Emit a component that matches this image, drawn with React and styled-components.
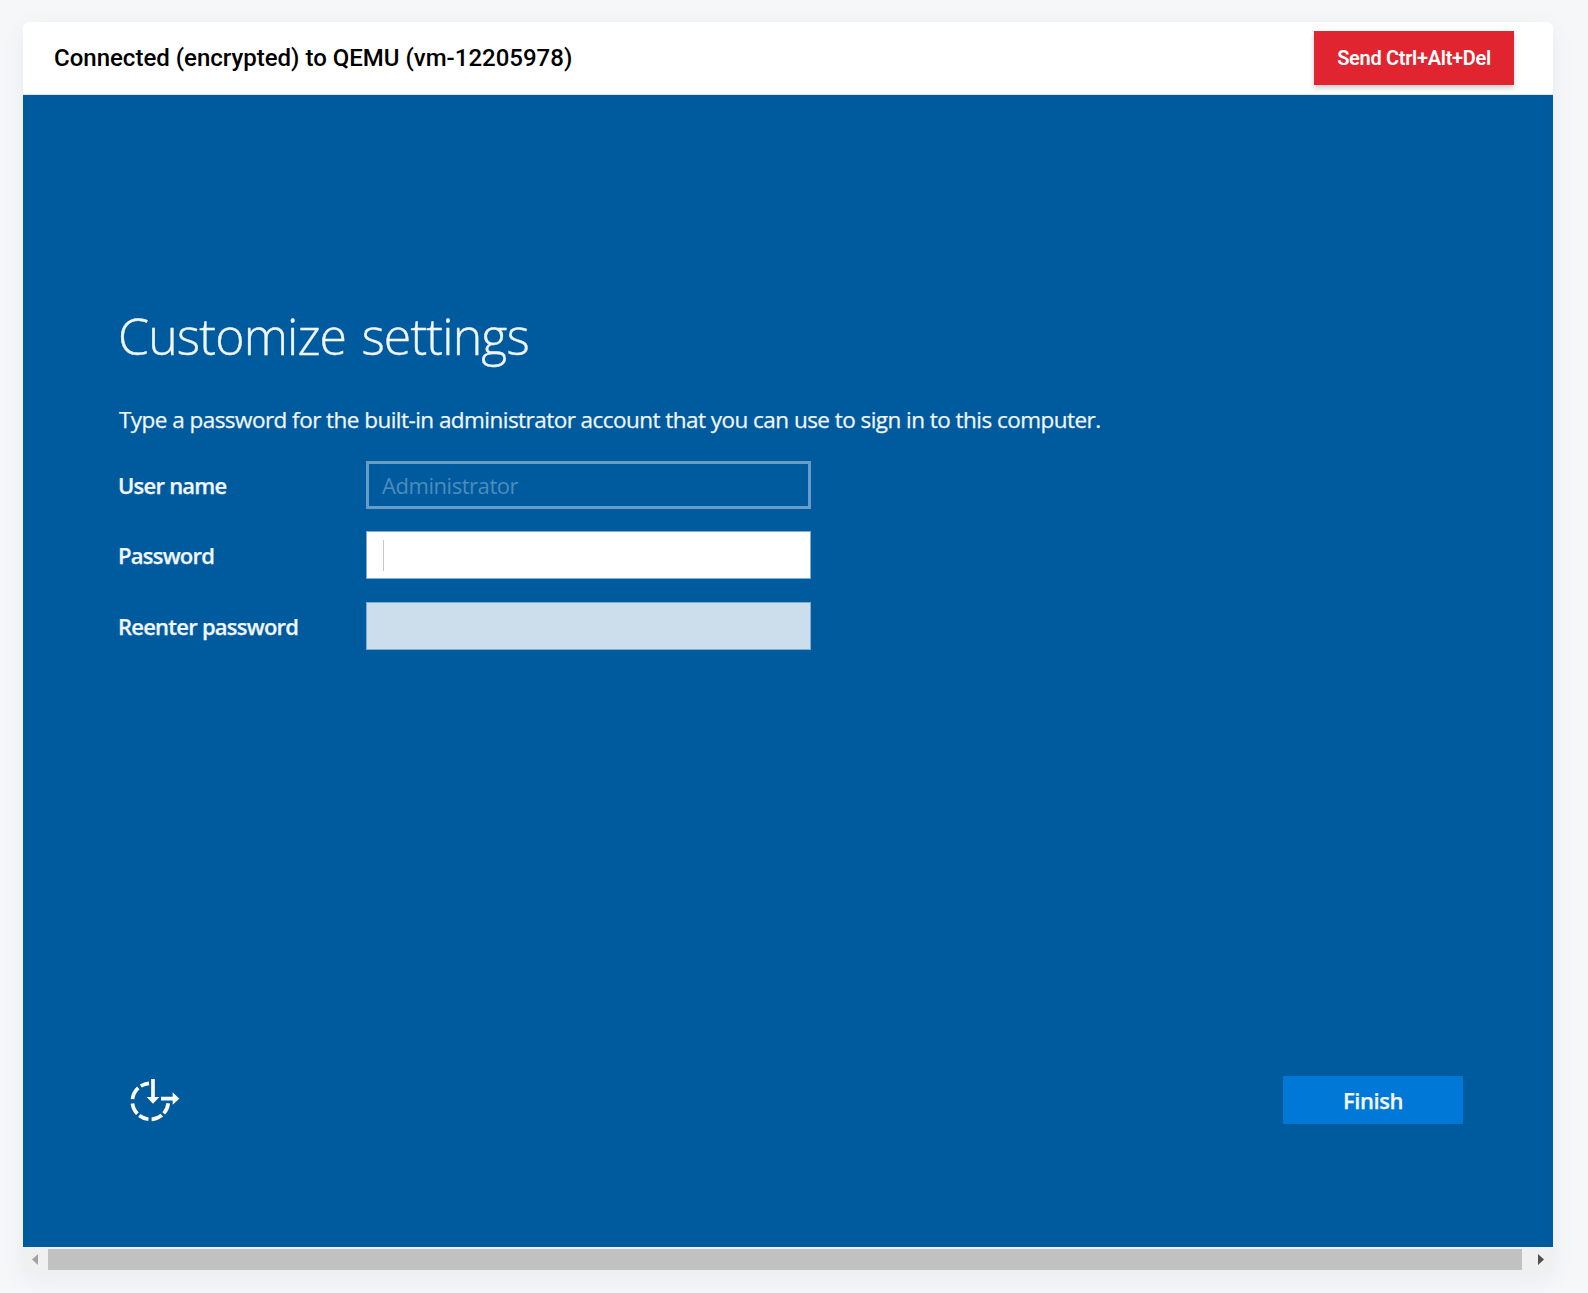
import React from "react";
import styled, { createGlobalStyle } from "styled-components";

const GlobalStyle = createGlobalStyle`
  *, *::before, *::after { box-sizing: border-box; }
  html, body { margin: 0; background: #f5f7f9; overflow: hidden; }
`;

const Page = styled.div`
  height: 1293px;
  padding: 22px 35px 21px 23px;
  font-family: Roboto, "Liberation Sans", sans-serif;
`;

const Card = styled.main`
  display: flex;
  flex-direction: column;
  height: 1250px;
  border-radius: 6px 6px 0 0;
  background: #fff;
  box-shadow: 0 6px 24px rgba(30, 40, 60, 0.06);
`;

const Header = styled.header`
  display: flex;
  flex: none;
  align-items: center;
  justify-content: space-between;
  height: 73px;
  padding: 0 39px 1px 31px;
  border-bottom: 1px solid #e2e5e9;
`;

const Title = styled.h1`
  margin: 0;
  font-size: 24px;
  font-weight: 500;
  line-height: 28px;
  color: #000;
  white-space: nowrap;
`;

const SendButton = styled.button`
  width: 200px;
  height: 54px;
  padding: 0;
  border: 0;
  background: #e12530;
  box-shadow: 0 3px 5px rgba(0, 0, 0, 0.2);
  color: #fff;
  font: 600 20px Roboto, sans-serif;
  letter-spacing: -0.3px;
`;

const Screen = styled.section`
  display: flex;
  flex: none;
  flex-direction: column;
  height: 1152px;
  padding: 208px 90px 123px 95px;
  background: #005a9e;
  color: #f0f6fb;
  font-family: "Open Sans", "Noto Sans", sans-serif;
`;

const Heading = styled.h2`
  margin: 0 0 39px;
  font-size: 50px;
  font-weight: 300;
  line-height: 66px;
  letter-spacing: -0.85px;
  word-spacing: 3px;
  -webkit-text-stroke: 0.4px currentColor;
  white-space: nowrap;
`;

const Description = styled.p`
  margin: 0 0 29px;
  padding-left: 1px;
  font-size: 22.5px;
  line-height: 24px;
  letter-spacing: -0.54px;
  -webkit-text-stroke: 0.25px currentColor;
  white-space: nowrap;
`;

const Form = styled.form`
  display: grid;
  gap: 22.4px;
`;

const Field = styled.label`
  display: grid;
  grid-template-columns: 248px 445px;
  align-items: center;
`;

const Label = styled.span`
  font-size: 22px;
  font-weight: 600;
  line-height: 30px;
  letter-spacing: -0.76px;
  -webkit-text-stroke: 0.25px currentColor;
`;

const Input = styled.span`
  display: flex;
  align-items: center;
  height: 48px;
  padding-left: ${(p) => (p.$variant === "disabled" ? 13 : 16)}px;
  border: ${(p) => (p.$variant === "disabled" ? "3px solid #669cc5" : "1px solid #80adcf")};
  background: ${(p) =>
    ({ disabled: "transparent", focused: "#fff", idle: "#ccdeec" })[p.$variant]};
  color: #4d8cbc;
  font-size: 22px;
  letter-spacing: -0.45px;
`;

const Caret = styled.span`
  width: 1px;
  height: 31px;
  background: #c8c8c8;
`;

const Footer = styled.footer`
  display: flex;
  align-items: center;
  justify-content: space-between;
  margin-top: auto;
  padding-left: 12px;
`;

const FinishButton = styled.button`
  width: 180px;
  height: 48px;
  padding: 0;
  border: 0;
  background: #0078d7;
  color: #f0f6fb;
  font: 600 22px "Open Sans", sans-serif;
  letter-spacing: -0.45px;
  -webkit-text-stroke: 0.25px currentColor;
`;

const Scrollbar = styled.div`
  display: grid;
  grid-template-columns: 25px 1fr 31px;
  flex: none;
  height: 25px;
  padding: 2px 0;
  background: #f0f0f0;
`;

const Thumb = styled.div`
  background: #c1c1c1;
`;

const Arrow = styled.svg`
  display: block;
  width: 6px;
  height: 11px;
  margin: 5px 0 0 ${(p) => p.$offset}px;
`;

function EaseOfAccessIcon() {
  return (
    <svg width="50" height="44" viewBox="61 54 150 132" fill="none" stroke="#fff">
      <g strokeWidth="11">
        <path d="M118.2 70.1A54 54 0 0 0 93.4 78.2" />
        <path d="M85.9 83.9A54 54 0 0 0 68.4 117.4" />
        <path d="M68.4 130.6A54 54 0 0 0 83.2 161.5" />
        <path d="M88.8 166.6A54 54 0 0 0 116.4 177.7" />
        <path d="M125.8 177.9A54 54 0 0 0 156.7 165.4" />
        <path d="M162.1 160.1A54 54 0 0 0 175.7 129.6" />
        <path d="M130 57V115M154 116H191" />
      </g>
      <path d="M111 111H149L130 131ZM189 97L209 116L189 134Z" fill="#fff" stroke="none" />
    </svg>
  );
}

export default function App() {
  return (
    <>
      <GlobalStyle />
      <Page>
        <Card>
          <Header>
            <Title>Connected (encrypted) to QEMU (vm-12205978)</Title>
            <SendButton type="button">Send Ctrl+Alt+Del</SendButton>
          </Header>
          <Screen>
            <Heading>Customize settings</Heading>
            <Description>
              Type a password for the built-in administrator account that you can use to sign in to this computer.
            </Description>
            <Form>
              <Field>
                <Label>User name</Label>
                <Input $variant="disabled">Administrator</Input>
              </Field>
              <Field>
                <Label>Password</Label>
                <Input $variant="focused"><Caret /></Input>
              </Field>
              <Field>
                <Label>Reenter password</Label>
                <Input $variant="idle" />
              </Field>
            </Form>
            <Footer>
              <EaseOfAccessIcon />
              <FinishButton type="button">Finish</FinishButton>
            </Footer>
          </Screen>
          <Scrollbar>
            <Arrow $offset={9} viewBox="0 0 6 11"><path d="M6 0V11L0 5.5Z" fill="#a3a3a3" /></Arrow>
            <Thumb />
            <Arrow $offset={16} viewBox="0 0 6 11"><path d="M0 0V11L6 5.5Z" fill="#505050" /></Arrow>
          </Scrollbar>
        </Card>
      </Page>
    </>
  );
}
